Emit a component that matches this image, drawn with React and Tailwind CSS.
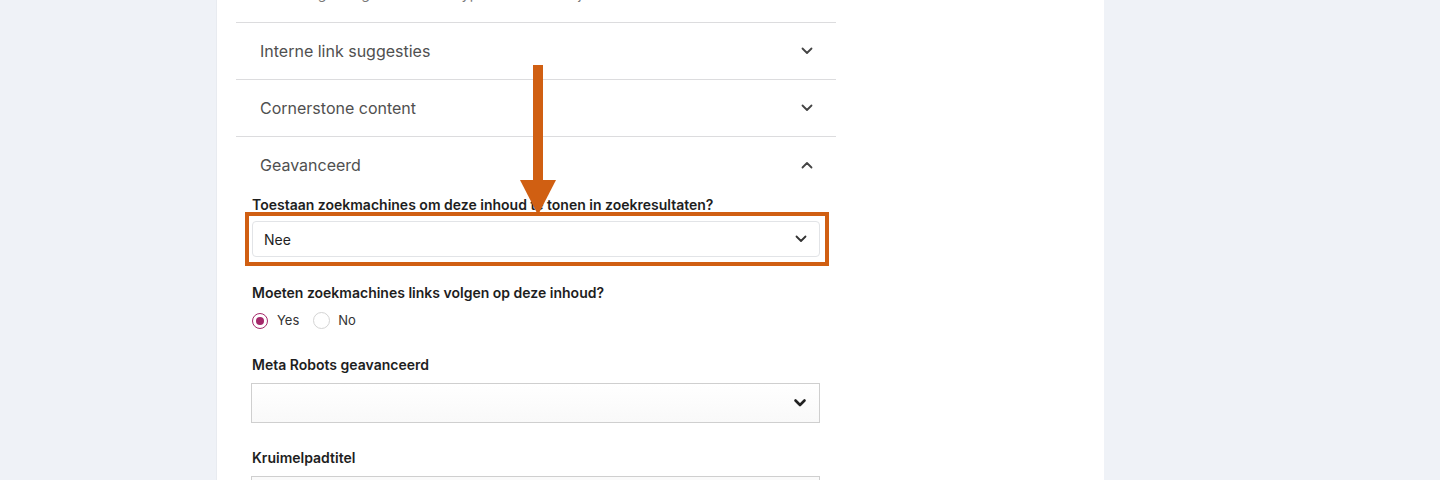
import React from "react";

const Chevron = ({ up = false, className = "" }) => (
  <svg width="14" height="14" viewBox="0 0 14 14" className={className} fill="none">
    <path
      d={up ? "M2.5 9.5 L7 5 L11.5 9.5" : "M2.5 4.5 L7 9 L11.5 4.5"}
      stroke="currentColor"
      strokeWidth="1.8"
      strokeLinecap="round"
      strokeLinejoin="round"
    />
  </svg>
);

const AccordionRow = ({ title, up = false }) => (
  <div className="border-t border-[#dcdcde] h-[57px] flex items-center justify-between pl-6 pr-[22px]">
    <span className="text-[16px] text-[#505050]">{title}</span>
    <Chevron up={up} className="text-[#444]" />
  </div>
);

export default function App() {
  return (
    <div
      className="relative h-[480px] overflow-hidden bg-[#eff2f7] flex"
      style={{ fontFamily: "Inter, 'Noto Sans', Arial, sans-serif" }}
    >
      <div className="ml-[216px] w-[888px] h-[480px] bg-white border-l border-[#e8ebf0] overflow-hidden">
        <div className="ml-[19px] w-[600px]">
          <div className="h-[22px] overflow-hidden">
            <div className="-mt-[16px] pl-[55px] text-[14px] leading-[20px] text-[#777] tracking-[0.4px]">
              Voeg een gerelateerd keyphrase toe aan je
            </div>
          </div>
          <AccordionRow title="Interne link suggesties" />
          <AccordionRow title="Cornerstone content" />
          <AccordionRow title="Geavanceerd" up />

          <div className="pl-[16px] pr-[16px]">
            <div className="text-[14px] leading-[20px] font-semibold text-[#1e1e1e] mt-[2px]">
              Toestaan zoekmachines om deze inhoud te tonen in zoekresultaten?
            </div>
            <div className="relative mt-[6px]">
              <div className="h-[36px] border border-[#e2e4e7] rounded-[4px] flex items-center justify-between pl-[11px] pr-[11px] text-[14px] text-[#1e1e1e]">
                <span>Nee</span>
                <Chevron className="text-[#333]" />
              </div>
              <div className="absolute -left-[7px] -top-[9px] -right-[9px] -bottom-[9px] border-4 border-[#d05f12] pointer-events-none" />
            </div>

            <div className="mt-[26px] text-[14px] leading-[20px] font-semibold text-[#1e1e1e]">
              Moeten zoekmachines links volgen op deze inhoud?
            </div>
            <div className="mt-[8px] flex items-center text-[13px] text-[#333]">
              <span className="w-[16px] h-[16px] rounded-full border border-[#a4286a] flex items-center justify-center">
                <span className="w-[8px] h-[8px] rounded-full bg-[#a4286a]" />
              </span>
              <span className="ml-[9px]">Yes</span>
              <span className="ml-[14px] w-[17px] h-[17px] rounded-full border border-[#d4d4d4]" />
              <span className="ml-[8px]">No</span>
            </div>

            <div className="mt-[24px] text-[14px] leading-[20px] font-semibold text-[#1e1e1e]">
              Meta Robots geavanceerd
            </div>
            <div className="mt-[8px] -ml-px h-[40px] border border-[#cfcfcf] bg-gradient-to-b from-white to-[#f9f9f9] flex items-center justify-end pr-[12px]">
              <svg width="14" height="14" viewBox="0 0 14 14" fill="none">
                <path d="M2.5 4.5 L7 9 L11.5 4.5" stroke="#222" strokeWidth="2.6" strokeLinecap="round" strokeLinejoin="round" />
              </svg>
            </div>

            <div className="mt-[25px] text-[14px] leading-[20px] font-semibold text-[#1e1e1e]">
              Kruimelpadtitel
            </div>
            <div className="mt-[8px] -ml-px h-[36px] border border-[#cfcfcf] bg-[#fafafa]" />
          </div>
        </div>
      </div>

      <div className="absolute left-[533px] top-[65px] w-[10px] h-[118px] bg-[#d05f12]" />
      <svg className="absolute left-[520px] top-[180px]" width="36" height="36" viewBox="0 0 36 36">
        <polygon points="0,0 36,0 18,35" fill="#d05f12" />
      </svg>
    </div>
  );
}
